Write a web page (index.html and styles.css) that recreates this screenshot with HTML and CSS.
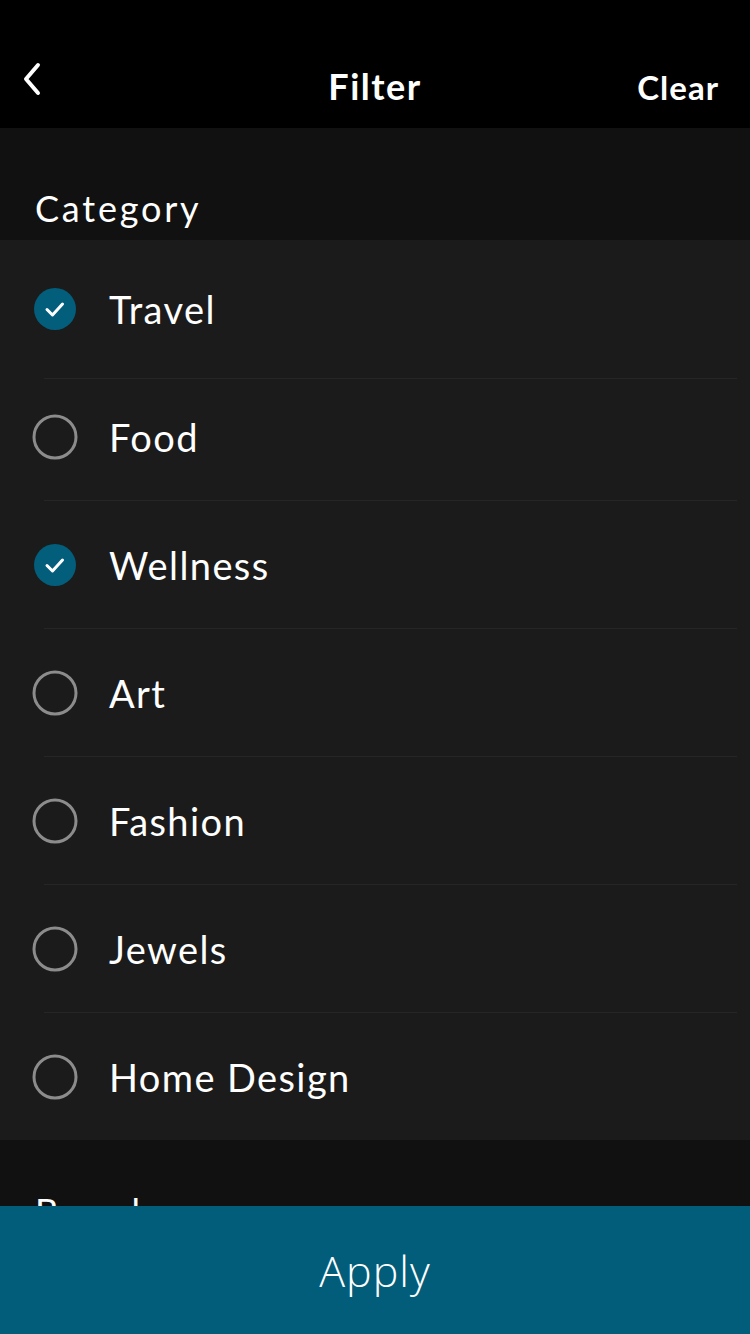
FILE: index.html
```html
<!DOCTYPE html>
<html>
<head>
<meta charset="utf-8">
<link rel="stylesheet" href="styles.css">
</head>
<body>
<div class="page">
  <header class="topbar">
    <span class="back">
      <svg width="20" height="34" viewBox="0 0 20 34"><path d="M16 3 L4 17 L16 31" fill="none" stroke="#fff" stroke-width="4" stroke-linecap="round" stroke-linejoin="round"/></svg>
    </span>
    <h1 class="title">Filter</h1>
    <span class="clear">Clear</span>
  </header>
  <main class="content">
    <div class="section-head">Category</div>
    <ul class="list">
      <li class="row first"><span class="check on"><svg width="42" height="42" viewBox="0 0 42 42"><circle cx="21" cy="21" r="21" fill="#025e7b"/><path d="M13 21.5 L18.5 27 L28.5 16" fill="none" stroke="#fff" stroke-width="3" stroke-linecap="round" stroke-linejoin="round"/></svg></span><span class="label">Travel</span></li>
      <li class="row second"><span class="check"><svg width="46" height="46" viewBox="0 0 46 46"><circle cx="23" cy="23" r="21" fill="none" stroke="#8c8c8c" stroke-width="3"/></svg></span><span class="label">Food</span></li>
      <li class="row"><span class="check on"><svg width="42" height="42" viewBox="0 0 42 42"><circle cx="21" cy="21" r="21" fill="#025e7b"/><path d="M13 21.5 L18.5 27 L28.5 16" fill="none" stroke="#fff" stroke-width="3" stroke-linecap="round" stroke-linejoin="round"/></svg></span><span class="label">Wellness</span></li>
      <li class="row"><span class="check"><svg width="46" height="46" viewBox="0 0 46 46"><circle cx="23" cy="23" r="21" fill="none" stroke="#8c8c8c" stroke-width="3"/></svg></span><span class="label">Art</span></li>
      <li class="row"><span class="check"><svg width="46" height="46" viewBox="0 0 46 46"><circle cx="23" cy="23" r="21" fill="none" stroke="#8c8c8c" stroke-width="3"/></svg></span><span class="label">Fashion</span></li>
      <li class="row"><span class="check"><svg width="46" height="46" viewBox="0 0 46 46"><circle cx="23" cy="23" r="21" fill="none" stroke="#8c8c8c" stroke-width="3"/></svg></span><span class="label">Jewels</span></li>
      <li class="row last"><span class="check"><svg width="46" height="46" viewBox="0 0 46 46"><circle cx="23" cy="23" r="21" fill="none" stroke="#8c8c8c" stroke-width="3"/></svg></span><span class="label">Home Design</span></li>
    </ul>
    <div class="section-head second-head">Brands</div>
  </main>
  <button class="apply">Apply</button>
</div>
</body>
</html>
```
FILE: styles.css
```css
html, body {
  margin: 0;
  padding: 0;
  background: #111111;
}
body {
  font-family: "Lato", "Liberation Sans", sans-serif;
  color: #ffffff;
}
.page {
  width: 750px;
  height: 1334px;
  display: flex;
  flex-direction: column;
  overflow: hidden;
}
.topbar {
  height: 128px;
  background: #000000;
  display: flex;
  align-items: center;
  padding: 40px 31px 0 22px;
  box-sizing: border-box;
  flex-shrink: 0;
}
.back {
  width: 129px;
  display: flex;
  align-items: center;
  margin-top: -10px;
}
.title {
  flex: 1;
  margin: 0;
  text-align: center;
  font-size: 36px;
  font-weight: 700;
  letter-spacing: 1.5px;
  margin-top: 4px;
}
.clear {
  width: 120px;
  text-align: right;
  font-size: 33px;
  font-weight: 700;
  letter-spacing: 1px;
  margin-top: 6px;
}
.content {
  flex: 1;
  overflow: hidden;
}
.section-head {
  height: 112px;
  box-sizing: border-box;
  padding: 58px 0 0 35px;
  font-size: 36px;
  line-height: 44px;
  letter-spacing: 2.8px;
  background: #111111;
}
.second-head {
  padding-top: 49px;
}
.list {
  list-style: none;
  margin: 0;
  padding: 0;
  background: #1b1b1b;
}
.row {
  height: 128px;
  display: flex;
  align-items: center;
  padding-left: 32px;
  box-sizing: border-box;
  position: relative;
}
.row::after {
  content: "";
  position: absolute;
  left: 44px;
  right: 13px;
  bottom: 0;
  height: 1px;
  background: #262626;
}
.row.first {
  height: 139px;
  padding-bottom: 1px;
}
.row.second {
  height: 122px;
  padding-bottom: 6px;
}
.row.last {
  height: 127px;
}
.row.last::after {
  display: none;
}
.check {
  width: 46px;
  height: 46px;
  display: flex;
  align-items: center;
  justify-content: center;
}
.label {
  margin-left: 31px;
  font-size: 38px;
  letter-spacing: 1.4px;
}
.apply {
  height: 128px;
  flex-shrink: 0;
  border: none;
  margin: 0;
  background: #025d7a;
  color: #ffffff;
  font-family: "Open Sans", "Liberation Sans", sans-serif;
  font-weight: 300;
  font-size: 43px;
  letter-spacing: 1px;
  padding: 0;
  width: 100%;
}
```
